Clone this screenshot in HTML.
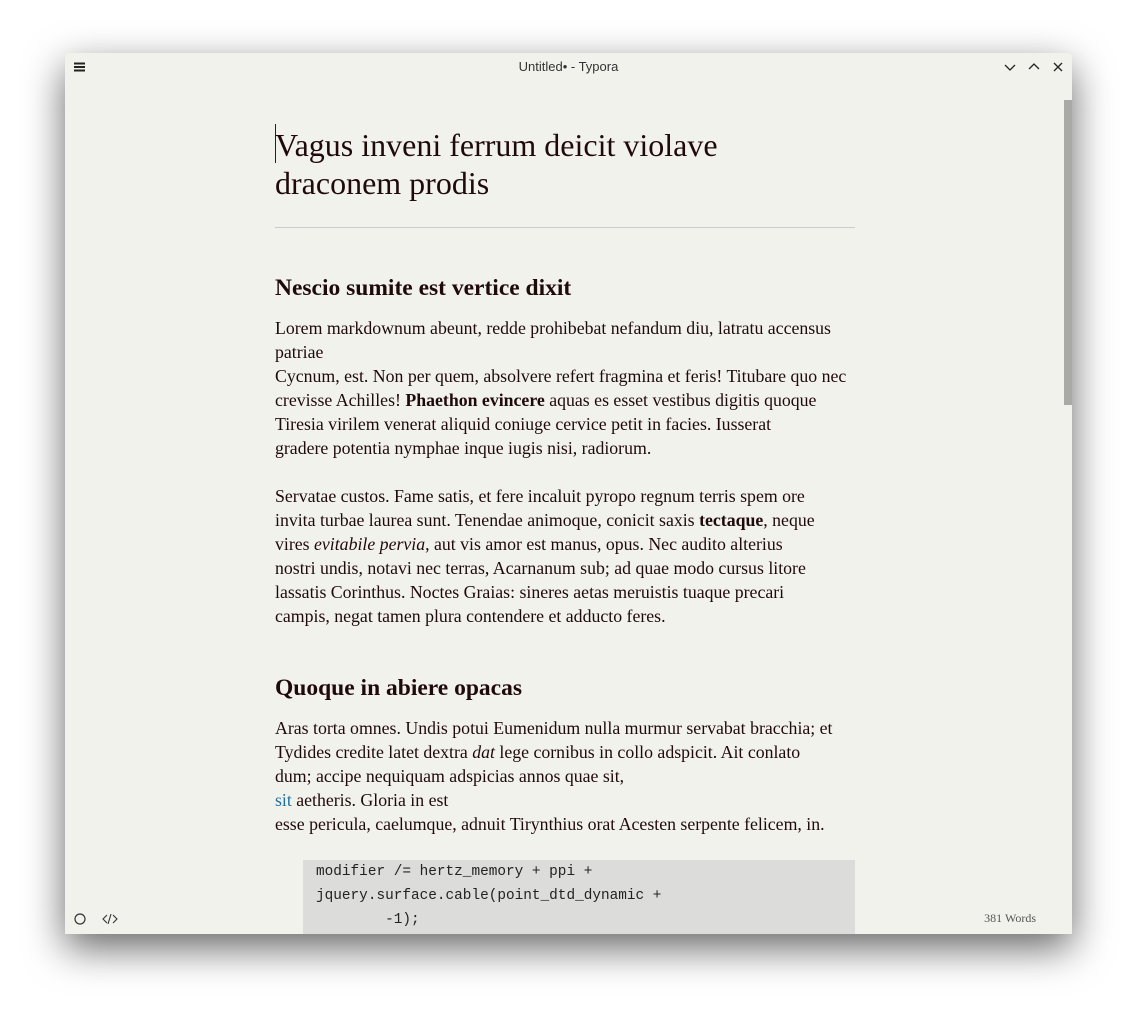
<!DOCTYPE html>
<html><head><meta charset="utf-8"><style>
*{margin:0;padding:0;box-sizing:border-box}
body{width:1137px;height:1011px;background:#fff;position:relative;overflow:hidden;font-family:"Liberation Serif",serif;color:#1f0a0a}
.win{position:absolute;left:65px;top:53px;width:1007px;height:881px;background:#f2f2ed;border-radius:4px 4px 0 0;box-shadow:0 14px 40px rgba(0,0,0,.6);overflow:hidden}
.t{position:absolute;left:0;top:0;width:1007px;text-align:center;font-family:"Liberation Sans",sans-serif;font-size:13px;color:#333;line-height:28px}
.l{position:absolute;left:210px;white-space:nowrap;font-size:17.8px;line-height:24px}
.h1{position:absolute;left:210px;font-size:32px;line-height:38px;white-space:nowrap}
.h2{position:absolute;left:210px;font-size:23.5px;font-weight:bold;line-height:30px;white-space:nowrap}
.code{position:absolute;left:238px;top:807px;width:552px;height:90px;background:#dcdcda;font-family:"Liberation Mono",monospace;font-size:14.4px;line-height:24px;padding:0 13px;white-space:pre;color:#222}
</style></head><body>
<div class="win">
<div class="t">Untitled• - Typora</div>
<svg style="position:absolute;left:8px;top:8px" width="13" height="12"><path d="M1 2.5H12M1 6H12M1 9.5H12" stroke="#222" stroke-width="2"/></svg>
<svg style="position:absolute;left:936px;top:6px" width="64" height="16"><path d="M4 6l5 5 5-5M28 10l5-5 5 5M53 4l8 8M61 4l-8 8" stroke="#222" stroke-width="1.3" fill="none"/></svg>
<div style="position:absolute;left:999px;top:47px;width:8px;height:305px;background:#a9aaa5"></div>
<div style="position:absolute;left:210px;top:71px;width:1px;height:39px;background:#222"></div>
<div class="h1" style="top:73px">Vagus inveni ferrum deicit violave</div>
<div class="h1" style="top:111px">draconem prodis</div>
<div style="position:absolute;left:210px;top:174px;width:580px;height:1px;background:#ccc"></div>
<div class="h2" style="top:220px">Nescio sumite est vertice dixit</div>
<div class="l" style="top:263px">Lorem markdownum abeunt, redde prohibebat nefandum diu, latratu accensus</div>
<div class="l" style="top:287px">patriae</div>
<div class="l" style="top:311px">Cycnum, est. Non per quem, absolvere refert fragmina et feris! Titubare quo nec</div>
<div class="l" style="top:335px">crevisse Achilles! <b>Phaethon evincere</b> aquas es esset vestibus digitis quoque</div>
<div class="l" style="top:359px">Tiresia virilem venerat aliquid coniuge cervice petit in facies. Iusserat</div>
<div class="l" style="top:383px">gradere potentia nymphae inque iugis nisi, radiorum.</div>
<div class="l" style="top:431px">Servatae custos. Fame satis, et fere incaluit pyropo regnum terris spem ore</div>
<div class="l" style="top:455px">invita turbae laurea sunt. Tenendae animoque, conicit saxis <b>tectaque</b>, neque</div>
<div class="l" style="top:479px">vires <i>evitabile pervia</i>, aut vis amor est manus, opus. Nec audito alterius</div>
<div class="l" style="top:503px">nostri undis, notavi nec terras, Acarnanum sub; ad quae modo cursus litore</div>
<div class="l" style="top:527px">lassatis Corinthus. Noctes Graias: sineres aetas meruistis tuaque precari</div>
<div class="l" style="top:551px">campis, negat tamen plura contendere et adducto feres.</div>
<div class="h2" style="top:620px">Quoque in abiere opacas</div>
<div class="l" style="top:663px">Aras torta omnes. Undis potui Eumenidum nulla murmur servabat bracchia; et</div>
<div class="l" style="top:687px">Tydides credite latet dextra <i>dat</i> lege cornibus in collo adspicit. Ait conlato</div>
<div class="l" style="top:711px">dum; accipe nequiquam adspicias annos quae sit,</div>
<div class="l" style="top:735px"><span style="color:#1f6fa8">sit</span> aetheris. Gloria in est</div>
<div class="l" style="top:759px">esse pericula, caelumque, adnuit Tirynthius orat Acesten serpente felicem, in.</div>
<div class="code">modifier /= hertz_memory + ppi +
jquery.surface.cable(point_dtd_dynamic +
        -1);</div>
<svg style="position:absolute;left:8px;top:859px" width="50" height="14"><circle cx="7" cy="7" r="5" stroke="#333" stroke-width="1.2" fill="none"/><path d="M34 3l-4 4 4 4M40 3l4 4-4 4M38 2l-3 10" stroke="#333" stroke-width="1.1" fill="none" transform="translate(0,0)"/></svg>
<div style="position:absolute;right:36px;top:858px;font-size:12px;color:#555">381 Words</div>
</div>
</body></html>
